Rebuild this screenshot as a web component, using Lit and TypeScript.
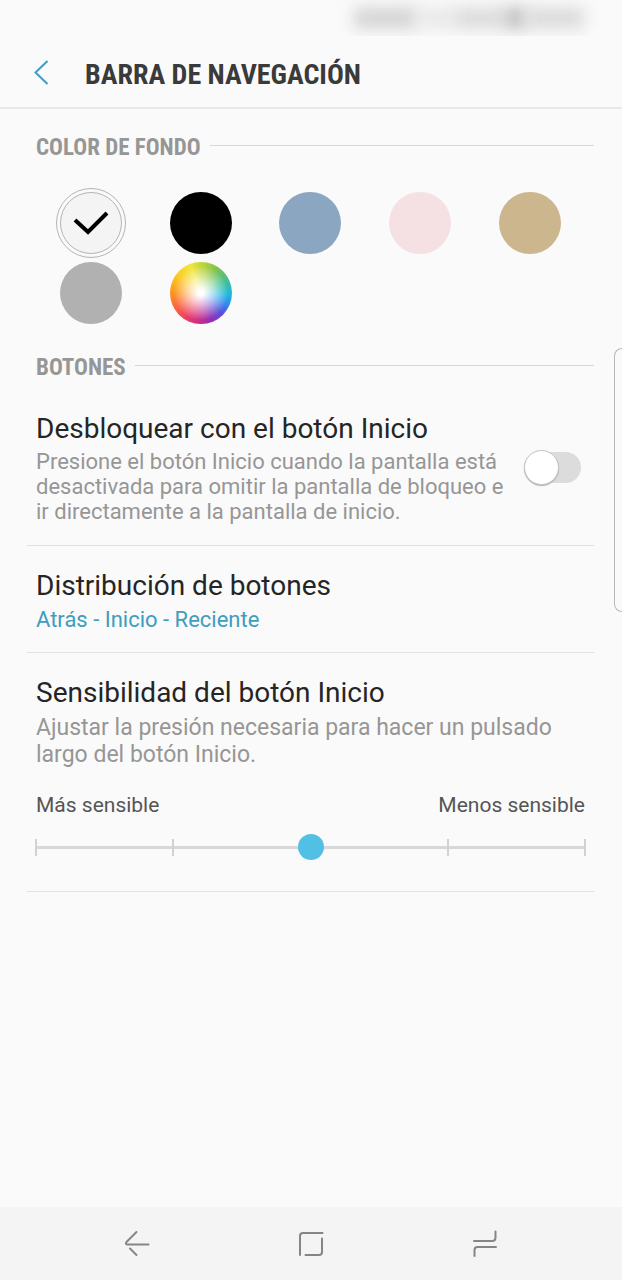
import { LitElement, html, css, svg } from "lit";
import { customElement, state } from "lit/decorators.js";
import { styleMap } from "lit/directives/style-map.js";

const SWATCHES = [
  { name: "Blanco", fill: "#f4f4f4" },
  { name: "Negro", fill: "#000000" },
  { name: "Azul", fill: "#8ba6c1" },
  { name: "Rosa", fill: "#f5e1e3" },
  { name: "Dorado", fill: "#ccb68d" },
  { name: "Gris", fill: "#b1b1b1" },
  {
    name: "Personalizado",
    fill:
      "radial-gradient(circle closest-side, #fff 8%, rgba(255,255,255,0.6) 42%, rgba(255,255,255,0) 88%), " +
      "conic-gradient(#c3d63a, #84c44c 30deg, #46bf8c 62deg, #1fb8dc 92deg, #2f8cf0 112deg, #5a50d8 135deg, #9030b4 158deg, #cc2c86 185deg, #f04460 215deg, #fb6c3c 245deg, #fd9c1c 275deg, #fcc824 305deg, #f2e63c 338deg, #c3d63a)",
  },
];

const STATUS_BLOBS = [
  { width: 64, shade: "#d2d2d2" },
  { width: 36, shade: "#e8e8e8" },
  { width: 52, shade: "#dadada" },
  { width: 20, shade: "#b8b8b8" },
  { width: 58, shade: "#d9d9d9" },
];

@customElement("app-root")
export class AppRoot extends LitElement {
  static styles = css`
    :host {
      display: block;
      font-family: Roboto, "Noto Sans", sans-serif;
      color: #252525;
      background: #fafafa;
    }
    * {
      box-sizing: border-box;
    }
    h1,
    h2,
    h3,
    p {
      margin: 0;
      font-weight: 400;
    }
    button {
      padding: 0;
      border: 0;
      background: none;
      font: inherit;
      color: inherit;
      cursor: pointer;
    }
    .screen {
      position: relative;
      display: flex;
      flex-direction: column;
      min-height: 100vh;
    }
    .status {
      display: flex;
      justify-content: flex-end;
      align-items: center;
      height: 36px;
      padding-right: 38px;
      overflow: hidden;
    }
    .blob {
      height: 20px;
      filter: blur(8px);
    }
    .top {
      display: flex;
      align-items: center;
      gap: 36px;
      height: 73px;
      padding: 2px 28px 0 33px;
      border-bottom: 2px solid #e8e8e8;
    }
    .back {
      display: flex;
    }
    .condensed {
      font-family: "Roboto Condensed", "Liberation Sans Narrow", Roboto, sans-serif;
      font-weight: 700;
    }
    .title {
      padding-top: 4px;
      font-size: 28px;
      line-height: 32px;
      color: #3a3a3a;
    }
    .content {
      flex: 1;
      padding: 25px 28px 0 27px;
    }
    .section {
      display: flex;
      align-items: center;
      gap: 9px;
      padding-left: 9px;
      font-size: 23px;
      line-height: 28px;
      color: #969696;
    }
    .section::after {
      content: "";
      flex: 1;
      height: 1px;
      margin-bottom: 5px;
      background: #d6d6d6;
    }
    .swatches {
      display: grid;
      grid-template-columns: repeat(5, 1fr);
      margin: 26px 9px;
      padding: 0;
      border: 0;
    }
    .swatch {
      display: grid;
      place-items: center;
      height: 70px;
      cursor: pointer;
    }
    .swatch > * {
      grid-area: 1 / 1;
    }
    .radio {
      appearance: none;
      width: 62px;
      height: 62px;
      margin: 0;
      border-radius: 50%;
      cursor: pointer;
    }
    .radio:checked {
      border: 1px solid #b4b4b4;
      outline: 1px solid #b4b4b4;
      outline-offset: 3px;
    }
    .check {
      pointer-events: none;
    }
    .item {
      display: block;
      padding: 0 9px;
      border-bottom: 1px solid #e2e2e2;
    }
    .toggle-row {
      display: flex;
      align-items: center;
      justify-content: space-between;
      gap: 16px;
      padding: 29px 13px 21px 9px;
    }
    .name {
      display: block;
      font-size: 28px;
      line-height: 36px;
    }
    .note {
      display: block;
      padding-top: 2px;
      font-size: 22px;
      line-height: 25px;
      color: #969696;
    }
    .switch {
      appearance: none;
      flex: none;
      display: flex;
      align-items: center;
      width: 57px;
      height: 31px;
      margin: 0;
      border-radius: 16px;
      background: #dcdcdc;
      cursor: pointer;
    }
    .switch::before {
      content: "";
      width: 33px;
      height: 33px;
      flex: none;
      border: 1px solid #c4c4c4;
      border-radius: 50%;
      background: #fff;
      box-shadow: 0 1px 1px #b0b0b0;
    }
    .switch:checked {
      justify-content: flex-end;
      background: #9bd8ee;
    }
    .link-row {
      width: 100%;
      padding: 22px 9px 20px;
      border-bottom: 1px solid #e2e2e2;
      text-align: left;
    }
    .value {
      display: block;
      padding-top: 3px;
      font-size: 22px;
      line-height: 25px;
      color: #3f9dbf;
    }
    .slider-row {
      padding: 22px 9px 31px;
    }
    .wide {
      padding-top: 3px;
      font-size: 23px;
      line-height: 27px;
    }
    .ends {
      display: flex;
      justify-content: space-between;
      padding-top: 23px;
      font-size: 21px;
      line-height: 28px;
      color: #555;
    }
    .slider {
      display: grid;
      align-items: center;
      margin-top: 15px;
    }
    .slider > * {
      grid-area: 1 / 1;
    }
    .ticks {
      display: flex;
      justify-content: space-between;
      align-items: center;
      height: 17px;
      margin: 0 -1px;
      background: linear-gradient(#d8d8d8, #d8d8d8) center / 100% 3px no-repeat;
    }
    .tick {
      width: 2px;
      height: 17px;
      background: #d2d2d2;
    }
    .range {
      appearance: none;
      height: 26px;
      margin: 0 -12px;
      background: none;
      cursor: pointer;
    }
    .range::-webkit-slider-thumb {
      appearance: none;
      width: 26px;
      height: 26px;
      border-radius: 50%;
      background: #52bfe4;
    }
    .nav {
      display: flex;
      justify-content: center;
      align-items: center;
      gap: 146px;
      height: 73px;
      background: #f4f4f4;
    }
    .nav-button {
      display: flex;
    }
    .edge {
      position: absolute;
      top: 348px;
      right: 0;
      width: 8px;
      height: 264px;
      border: 1px solid #b8b8b8;
      border-right: 0;
      border-radius: 8px 0 0 8px;
    }
  `;

  @state() private selected = 0;

  private navIcon(shape: unknown) {
    return html`<svg width="28" height="28" viewBox="0 1 28 28" fill="none" stroke="#858585" stroke-width="2" stroke-linecap="round" aria-hidden="true">${shape}</svg>`;
  }

  render() {
    return html`
      <div class="screen">
        <div class="status" aria-hidden="true">
          ${STATUS_BLOBS.map(
            (b) => html`<span class="blob" style=${styleMap({ width: `${b.width}px`, background: b.shade })}></span>`
          )}
        </div>
        <header class="top">
          <button class="back" aria-label="Atrás">
            <svg width="16" height="26" viewBox="0 0 16 26" fill="none" stroke="#3f9dbf" stroke-width="2" aria-hidden="true">
              <path d="M14.5 1 2.5 12.5 14.5 24" />
            </svg>
          </button>
          <h1 class="title condensed">BARRA DE NAVEGACIÓN</h1>
        </header>
        <main class="content">
          <h2 class="section condensed" id="fondo">COLOR DE FONDO</h2>
          <fieldset class="swatches" aria-labelledby="fondo">
            ${SWATCHES.map(
              (s, i) => html`<label class="swatch">
                <input
                  class="radio"
                  type="radio"
                  name="color"
                  aria-label=${s.name}
                  style=${styleMap({ background: s.fill })}
                  .checked=${i === this.selected}
                  @change=${() => (this.selected = i)}
                />
                ${i === this.selected
                  ? html`<svg class="check" width="36" height="26" viewBox="0 0 36 26" fill="none" stroke=${i === 1 ? "#fff" : "#000"} stroke-width="4" aria-hidden="true">
                      <path d="M2 10 15 22 34 3" />
                    </svg>`
                  : null}
              </label>`
            )}
          </fieldset>

          <h2 class="section condensed">BOTONES</h2>
          <label class="item toggle-row">
            <span>
              <span class="name">Desbloquear con el botón Inicio</span>
              <span class="note">Presione el botón Inicio cuando la pantalla está desactivada para omitir la pantalla de bloqueo e ir directamente a la pantalla de inicio.</span>
            </span>
            <input class="switch" type="checkbox" role="switch" />
          </label>
          <button class="link-row">
            <span class="name">Distribución de botones</span>
            <span class="value">Atrás - Inicio - Reciente</span>
          </button>
          <section class="item slider-row">
            <label class="name" for="sens">Sensibilidad del botón Inicio</label>
            <p class="note wide">Ajustar la presión necesaria para hacer un pulsado largo del botón Inicio.</p>
            <div class="ends"><span>Más sensible</span><span>Menos sensible</span></div>
            <div class="slider">
              <div class="ticks" aria-hidden="true">
                ${[0, 1, 2, 3, 4].map(() => html`<span class="tick"></span>`)}
              </div>
              <input class="range" id="sens" type="range" min="0" max="4" step="1" value="2" />
            </div>
          </section>
        </main>
        <nav class="nav">
          <button class="nav-button" aria-label="Atrás">
            ${this.navIcon(svg`<path d="M13.5 3 3.500 13Q2 15 4 15.500H25.500M7 19.500l6.500 6.500" />`)}
          </button>
          <button class="nav-button" aria-label="Inicio">
            ${this.navIcon(svg`<path d="M3 26V7Q3 4 6 4H25.500M25 9.500V23Q25 26 22 26H8.500" />`)}
          </button>
          <button class="nav-button" aria-label="Recientes">
            ${this.navIcon(svg`<path d="M3 12H21Q24.500 12 24.500 8.500V2.500M25 18H6.500Q3.500 18 3.500 21V27" />`)}
          </button>
        </nav>
        <div class="edge"></div>
      </div>
    `;
  }
}
